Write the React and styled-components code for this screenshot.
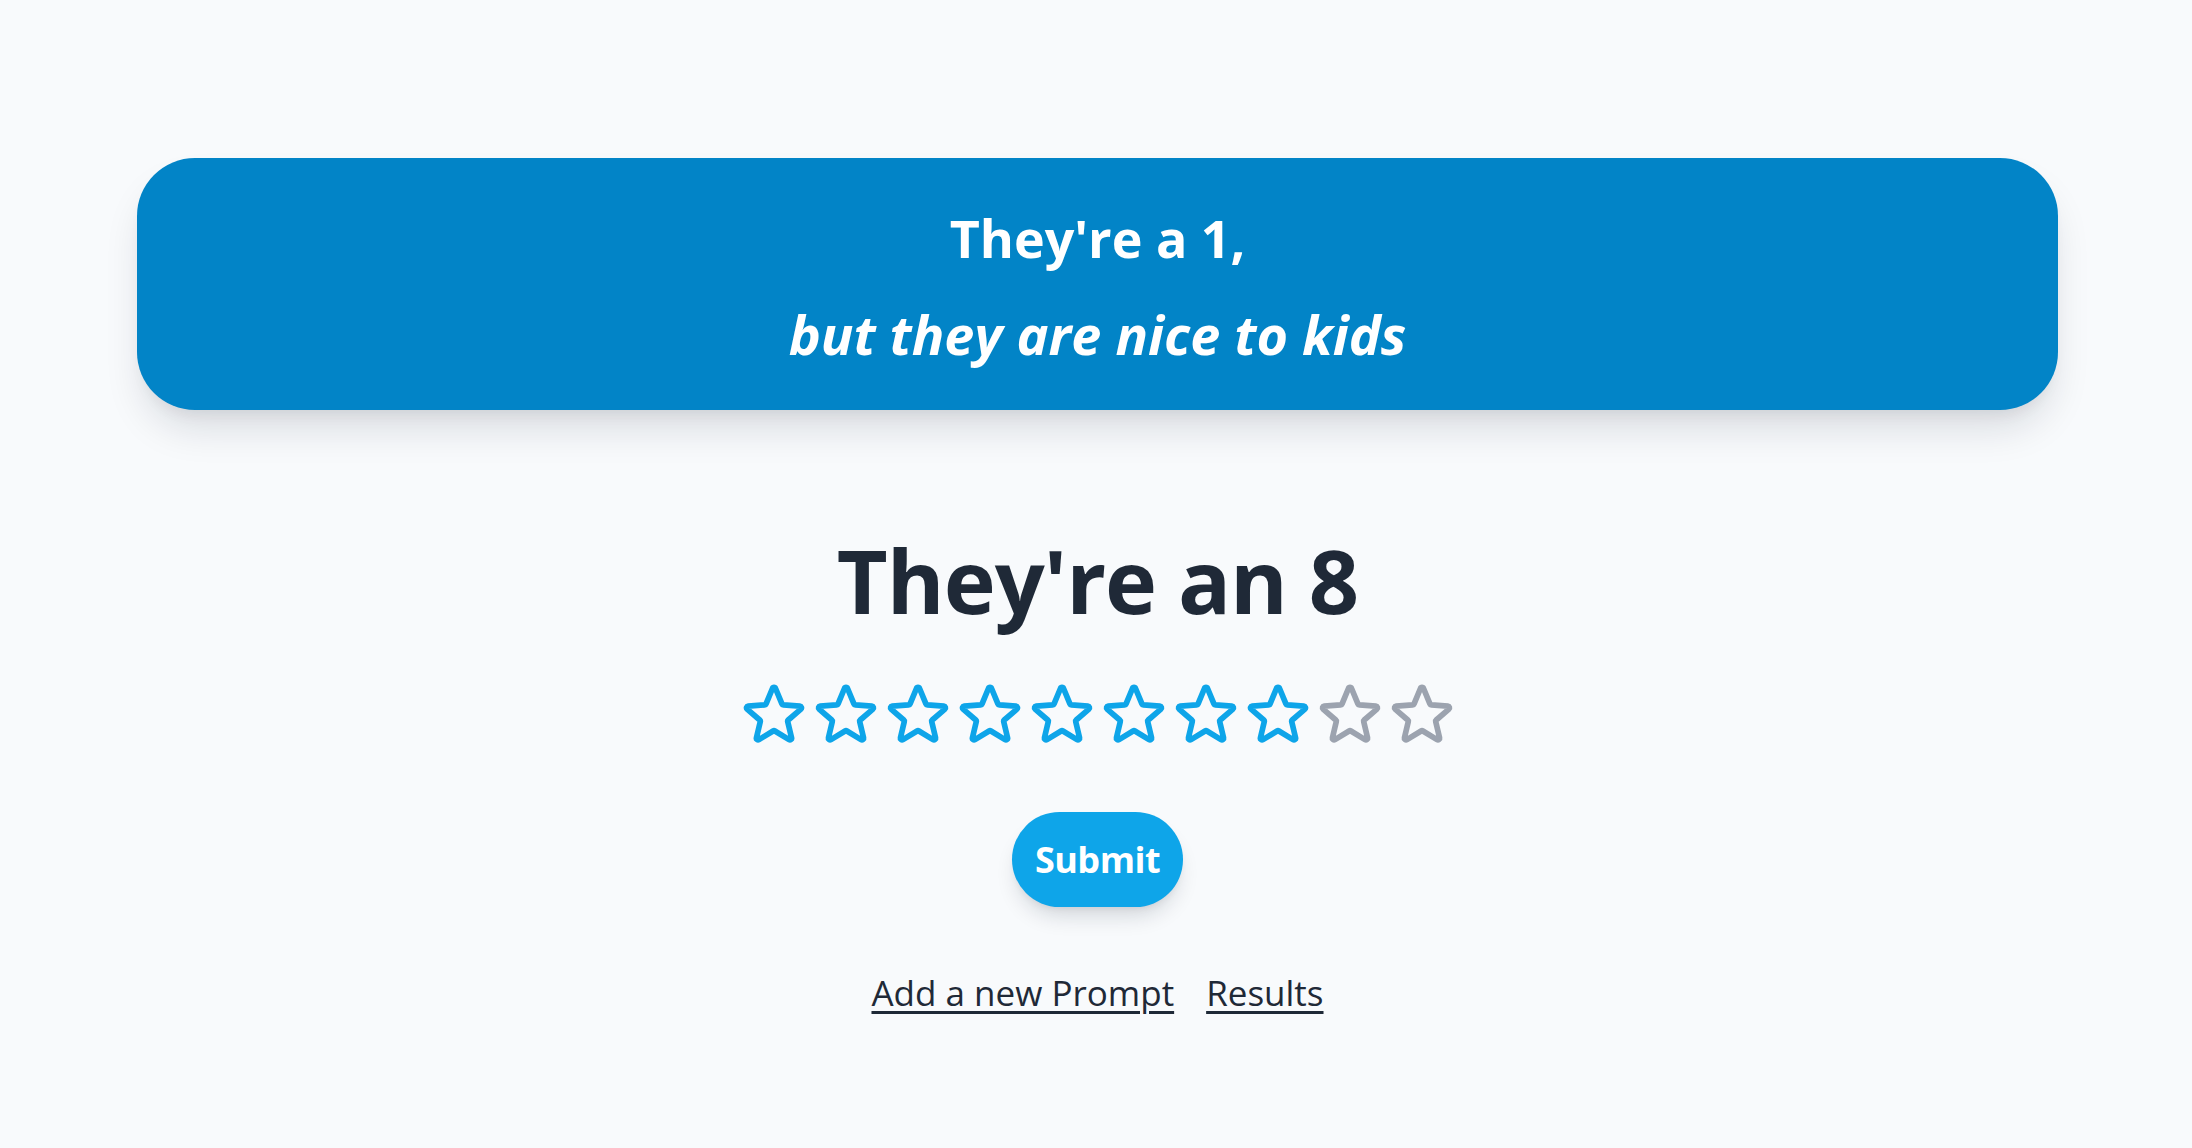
import React from 'react';
import styled, { createGlobalStyle } from 'styled-components';

const TOTAL = 10;
const RATING = 8;

const STAR_PATH =
  'M11.48 3.499a.562.562 0 0 1 1.04 0l2.125 5.111a.563.563 0 0 0 .475.345l5.518.442c.499.04.701.663.321.988l-4.204 3.602a.563.563 0 0 0-.182.557l1.285 5.385a.562.562 0 0 1-.84.61l-4.725-2.885a.562.562 0 0 0-.586 0L6.982 20.54a.562.562 0 0 1-.84-.61l1.285-5.386a.562.562 0 0 0-.182-.557l-4.204-3.602a.562.562 0 0 1 .321-.988l5.518-.442a.563.563 0 0 0 .475-.345L11.48 3.5Z';

export default function App() {
  return (
    <>
      <GlobalStyle />
      <Page>
        <Banner>
          <BannerTitle>They're a 1,</BannerTitle>
          <BannerSub>but they are nice to kids</BannerSub>
        </Banner>
        <Heading>They're an {RATING}</Heading>
        <Stars>
          {Array.from({ length: TOTAL }, (_, i) => (
            <Star key={i} $on={i < RATING} viewBox="0 0 24 24" fill="none" strokeWidth="1.9">
              <path d={STAR_PATH} strokeLinecap="round" strokeLinejoin="round" />
            </Star>
          ))}
        </Stars>
        <SubmitButton>Submit</SubmitButton>
        <Links>
          <NavLink href="#">Add a new Prompt</NavLink>
          <NavLink href="#">Results</NavLink>
        </Links>
      </Page>
    </>
  );
}

const GlobalStyle = createGlobalStyle`
  html, body {
    margin: 0;
    background: #f8fafc;
    font-family: "Open Sans", "Noto Sans", sans-serif;
    color: #1f2937;
  }
`;

const Page = styled.main`
  min-height: 1148px;
  display: flex;
  flex-direction: column;
  align-items: center;
  padding: 158px 134px 0 137px;
  box-sizing: border-box;
`;

const Banner = styled.section`
  align-self: stretch;
  height: 252px;
  box-sizing: border-box;
  background: #0284c7;
  border-radius: 58px;
  box-shadow: 0 24px 40px -8px rgba(15, 23, 42, 0.14), 0 10px 16px -8px rgba(15, 23, 42, 0.08);
  color: #fff;
  display: flex;
  flex-direction: column;
  align-items: center;
  padding-top: 40px;
`;

const BannerTitle = styled.h2`
  margin: 0;
  font-size: 52px;
  line-height: 80px;
  font-weight: 700;
`;

const BannerSub = styled.p`
  margin: 16px 0 0;
  font-size: 54px;
  line-height: 80px;
  font-weight: 700;
  font-style: italic;
`;

const Heading = styled.h1`
  margin: 112px 0 0;
  font-size: 88px;
  line-height: 116px;
  font-weight: 700;
  color: #1f2937;
  letter-spacing: -1px;
`;

const Stars = styled.div`
  display: flex;
  margin-top: 40px;
`;

const Star = styled.svg`
  width: 72px;
  height: 72px;
  stroke: ${p => (p.$on ? '#0ea5e9' : '#9ca3af')};
  cursor: pointer;
`;

const SubmitButton = styled.button`
  margin-top: 62px;
  height: 95px;
  padding: 0 23px;
  border: none;
  border-radius: 48px;
  background: #0ea5e9;
  color: #fff;
  font-family: inherit;
  font-size: 36px;
  font-weight: 700;
  letter-spacing: -0.5px;
  box-shadow: 0 14px 22px -6px rgba(15, 23, 42, 0.16), 0 4px 8px -4px rgba(15, 23, 42, 0.1);
  cursor: pointer;
`;

const Links = styled.nav`
  margin-top: 58px;
  display: flex;
  gap: 32px;
`;

const NavLink = styled.a`
  color: #1f2937;
  font-size: 35px;
  line-height: 56px;
  text-decoration: underline;
  text-underline-offset: 5px;
  text-decoration-thickness: 3px;
`;
